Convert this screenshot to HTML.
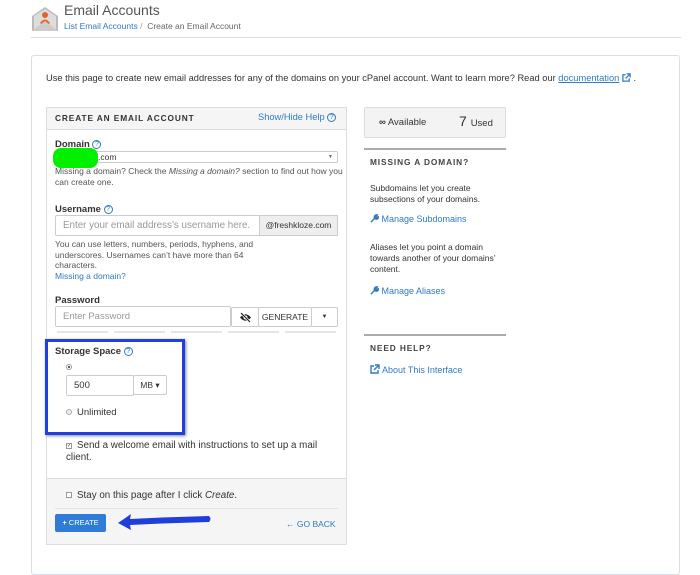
<!DOCTYPE html>
<html><head><meta charset="utf-8"><style>
*{box-sizing:border-box;margin:0;padding:0}
body{width:700px;height:560px;background:#fff;font-family:"Liberation Sans",sans-serif;color:#333;position:relative;overflow:hidden;font-size:9px}
.a{position:absolute}
a,.lnk{color:#2f7bbf;text-decoration:none}
.inp{border:1px solid #ccc;background:#fff;border-radius:2px}
.ph{color:#999}
.q{display:inline-block;width:9px;height:9px;border:1px solid #2f7bbf;border-radius:50%;color:#2f7bbf;font-size:7px;line-height:7px;text-align:center;vertical-align:middle}
svg.i{vertical-align:-1px}
</style></head><body>
<svg class="a" style="left:31px;top:4px" width="28" height="28" viewBox="0 0 28 28"><path d="M1 12 L14 3 L27 12 L27 27 L1 27Z" fill="#bbb"/><path d="M3 12 L14 5 L25 12 L25 25 L3 25Z" fill="#ddd"/><circle cx="14" cy="11" r="3" fill="#e8632b"/><path d="M9 19 Q14 12 19 19 L14 23Z" fill="#e8632b"/><path d="M1 27 L14 17 L27 27" fill="#ccc"/></svg>
<div class="a" style="left:64px;top:2px;font-size:14px;color:#555">Email Accounts</div>
<div class="a" style="left:64px;top:21px;font-size:8.5px"><span class="lnk">List Email Accounts</span> <span style="color:#999">/</span> &nbsp;<span style="color:#666">Create an Email Account</span></div>
<div class="a" style="left:31px;top:37px;width:650px;height:1px;background:#d8dfe6"></div>
<div class="a" style="left:31px;top:55px;width:649px;height:520px;border:1px solid #d8dfe6;border-radius:3px"></div>
<div class="a" style="left:46px;top:73px;font-size:9.3px;color:#333;white-space:nowrap">Use this page to create new email addresses for any of the domains on your cPanel account. Want to learn more? Read our <span style="color:#2f7bbf;text-decoration:underline">documentation</span> <svg class="i" width="9" height="9" viewBox="0 0 10 10"><path d="M4 2H1v7h7V6M5 1h4v4M9 1L4 6" stroke="#2f7bbf" stroke-width="1.4" fill="none"/></svg> .</div>
<div class="a" style="left:46px;top:107px;width:301px;height:438px;border:1px solid #ddd;background:#fff"></div>
<div class="a" style="left:47px;top:108px;width:299px;height:22px;background:#f5f5f5;border-bottom:1px solid #ddd"></div>
<div class="a" style="left:55px;top:113px;font-size:8.3px;font-weight:bold;letter-spacing:.9px">CREATE AN EMAIL ACCOUNT</div>
<div class="a lnk" style="left:258px;top:112px;font-size:9.3px">Show/Hide Help <span class="q">?</span></div>
<div class="a" style="left:55px;top:139px;font-size:9.5px;font-weight:bold">Domain <span class="q" style="font-weight:normal">?</span></div>
<div class="a inp" style="left:54px;top:151px;width:284px;height:12px;font-size:8.5px;line-height:10px;padding-left:43px">.com<span style="position:absolute;right:4px;font-size:5px;color:#666">&#9660;</span></div>
<div class="a" style="left:53px;top:148px;width:45px;height:20px;background:#00f000;border-radius:8px"></div>
<div class="a" style="left:55px;top:166px;width:292px;font-size:8.5px;line-height:11px;color:#555">Missing a domain? Check the <i>Missing a domain?</i> section to find out how you can create one.</div>
<div class="a" style="left:55px;top:204px;font-size:9.5px;font-weight:bold">Username <span class="q" style="font-weight:normal">?</span></div>
<div class="a inp" style="left:55px;top:215px;width:205px;height:21px;font-size:9.8px;line-height:19px;padding-left:7px"><span class="ph">Enter your email address’s username here.</span></div>
<div class="a" style="left:259px;top:215px;width:79px;height:21px;background:#eee;border:1px solid #ccc;font-size:8.5px;line-height:19px;text-align:center">@freshkloze.com</div>
<div class="a" style="left:55px;top:239px;width:205px;font-size:8.5px;line-height:10.5px;color:#555">You can use letters, numbers, periods, hyphens, and underscores. Usernames can’t have more than 64 characters.<br><span class="lnk">Missing a domain?</span></div>
<div class="a" style="left:55px;top:295px;font-size:9.5px;font-weight:bold">Password</div>
<div class="a inp" style="left:55px;top:306px;width:176px;height:21px;font-size:9.5px;line-height:19px;padding-left:7px"><span class="ph">Enter Password</span></div>
<div class="a inp" style="left:231px;top:307px;width:28px;height:20px"><svg style="position:absolute;left:7px;top:4px" width="13" height="11" viewBox="0 0 13 11"><path d="M1 5.5Q6.5 -1 12 5.5Q6.5 12 1 5.5Z" fill="#222"/><circle cx="6.5" cy="5.5" r="2" fill="#fff"/><path d="M2 1L11 10" stroke="#fff" stroke-width="2.5"/><path d="M2 1L11 10" stroke="#222" stroke-width="1.2"/></svg></div>
<div class="a inp" style="left:258px;top:307px;width:54px;height:20px;text-align:center;font-size:8.5px;line-height:18px">GENERATE</div>
<div class="a inp" style="left:311px;top:307px;width:27px;height:20px;text-align:center;font-size:6px;line-height:18px">&#9660;</div>
<div class="a" style="left:57px;top:331px;width:280px;height:2px;background:repeating-linear-gradient(90deg,#e5e5e5 0 51px,#fff 51px 57px)"></div>
<div class="a" style="left:45px;top:339px;width:140px;height:96px;border:3px solid #1f3fe0;box-shadow:1px 1px 3px #888"></div>
<div class="a" style="left:55px;top:346px;font-size:9.5px;font-weight:bold">Storage Space <span class="q" style="font-weight:normal">?</span></div>
<div class="a" style="left:66px;top:364px;width:6px;height:6px;border:1px solid #999;border-radius:50%;background:radial-gradient(#555 35%,#fff 45%)"></div>
<div class="a inp" style="left:66px;top:375px;width:68px;height:21px;font-size:9.5px;line-height:19px;padding-left:7px">500</div>
<div class="a inp" style="left:133px;top:375px;width:34px;height:20px;font-size:8.5px;line-height:18px;text-align:center">MB &#9662;</div>
<div class="a" style="left:66px;top:409px;width:6px;height:6px;border:1px solid #aaa;border-radius:50%;background:#eee"></div>
<div class="a" style="left:77px;top:407px;font-size:9.5px">Unlimited</div>
<div class="a" style="left:66px;top:443px;width:6px;height:6px;border:1px solid #999;font-size:5px;line-height:4px">&#10003;</div>
<div class="a" style="left:66px;top:440px;width:258px;font-size:9.8px;line-height:12px;text-indent:11px">Send a welcome email with instructions to set up a mail client.</div>
<div class="a" style="left:47px;top:478px;width:299px;height:66px;background:#f5f5f5;border-top:1px solid #ddd"></div>
<div class="a" style="left:66px;top:492px;width:6px;height:6px;border:1px solid #999;background:#fff"></div>
<div class="a" style="left:77px;top:490px;font-size:9.8px">Stay on this page after I click <i>Create</i>.</div>
<div class="a" style="left:55px;top:508px;width:283px;height:1px;background:#e3e3e3"></div>
<div class="a" style="left:55px;top:514px;width:51px;height:18px;background:#2f7bd8;border-radius:2px;color:#fff;font-size:7.5px;line-height:18px;text-align:center"><b>+</b> CREATE</div>
<svg class="a" style="left:115px;top:510px" width="100" height="22" viewBox="0 0 100 22"><path d="M3 13 L16 4 L15 9 Q55 7 94 6 Q97 9 94 12 Q55 13 15 15 L16 20Z" fill="#1f3fd8"/></svg>
<div class="a lnk" style="left:286px;top:519px;font-size:8.5px">&#8592; GO BACK</div>
<div class="a" style="left:364px;top:107px;width:142px;height:31px;background:#f3f3f3;border:1px solid #ddd;border-radius:2px"></div>
<div class="a" style="left:379px;top:117px;font-size:9.5px"><b>&#8734;</b> Available</div>
<div class="a" style="left:459px;top:113px;font-size:14px">7 <span style="font-size:9.5px">Used</span></div>
<div class="a" style="left:364px;top:148px;width:142px;height:2px;background:#aaa"></div>
<div class="a" style="left:370px;top:157px;font-size:8.3px;font-weight:bold;letter-spacing:.9px;color:#444">MISSING A DOMAIN?</div>
<div class="a" style="left:370px;top:183px;width:130px;font-size:8.5px;line-height:11px">Subdomains let you create subsections of your domains.</div>
<div class="a lnk" style="left:370px;top:214px;font-size:9px"><svg class="i" width="9" height="9" viewBox="0 0 10 10"><path d="M1 9L5.5 4.5M5 5Q4 1 8 1L7 3L8 4L9.5 3Q9 7 5 5" stroke="#2f7bbf" stroke-width="1.6" fill="#2f7bbf"/></svg> Manage Subdomains</div>
<div class="a" style="left:370px;top:242px;width:136px;font-size:8.5px;line-height:11px">Aliases let you point a domain towards another of your domains’ content.</div>
<div class="a lnk" style="left:370px;top:286px;font-size:9px"><svg class="i" width="9" height="9" viewBox="0 0 10 10"><path d="M1 9L5.5 4.5M5 5Q4 1 8 1L7 3L8 4L9.5 3Q9 7 5 5" stroke="#2f7bbf" stroke-width="1.6" fill="#2f7bbf"/></svg> Manage Aliases</div>
<div class="a" style="left:364px;top:334px;width:142px;height:2px;background:#aaa"></div>
<div class="a" style="left:370px;top:343px;font-size:8.3px;font-weight:bold;letter-spacing:.9px;color:#444">NEED HELP?</div>
<div class="a lnk" style="left:370px;top:364px;font-size:9px"><svg class="i" width="10" height="10" viewBox="0 0 10 10"><path d="M4 2H1v7h7V6M5 1h4v4M9 1L4 6" stroke="#2f7bbf" stroke-width="1.4" fill="none"/></svg> About This Interface</div>
</body></html>
